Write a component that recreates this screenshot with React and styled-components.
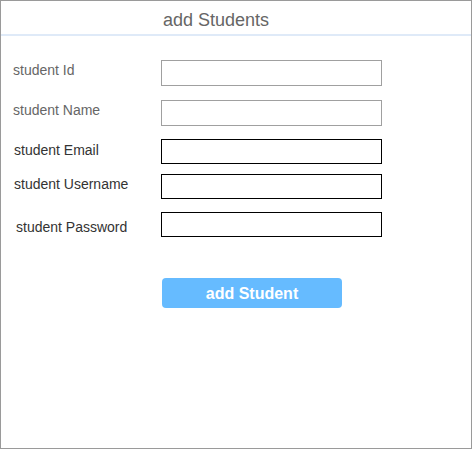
import React from 'react'
import styled, { createGlobalStyle } from 'styled-components'

const GlobalStyle = createGlobalStyle`
    html, body {
        margin: 0;
        padding: 0;
        background: #ffffff;
    }
    body {
        font-family: "Liberation Sans", Arial, sans-serif;
    }
`;

const Frame = styled.div`
    box-sizing: border-box;
    width: 472px;
    height: 449px;
    border: 1px solid #9a9a9a;
    background: #ffffff;
`;

const Header = styled.div`
    box-sizing: border-box;
    height: 35px;
    padding: 9px 0 0 162px;
    border-bottom: 2px solid #dfeaf8;
    font-size: 18px;
    line-height: 21px;
    color: #666666;
`;

const Form = styled.div`
    display: flex;
    flex-direction: column;
    padding-top: 24px;
`;

const Row = styled.div`
    display: flex;
    align-items: flex-start;
    margin-top: ${p => p.$gap}px;
`;

const Label = styled.span`
    box-sizing: border-box;
    width: 160px;
    padding-left: ${p => p.$indent}px;
    padding-top: ${p => p.$drop}px;
    font-size: 14px;
    line-height: 16px;
    color: ${p => (p.$muted ? '#666666' : '#333333')};
`;

const Field = styled.input`
    box-sizing: border-box;
    width: 221px;
    height: ${p => p.$h}px;
    margin: 0;
    padding: 0 4px;
    border: 1px solid ${p => (p.$muted ? '#a0a0a0' : '#000000')};
    border-radius: 0;
    background: #ffffff;
    outline: none;
    font-family: inherit;
    font-size: 14px;
`;

const Actions = styled.div`
    display: flex;
    padding: 41px 0 0 161px;
`;

const AddButton = styled.button`
    width: 180px;
    height: 30px;
    padding: 2px 0 0;
    border: none;
    border-radius: 4px;
    background: #66bbff;
    color: #ffffff;
    font-family: inherit;
    font-size: 16px;
    font-weight: bold;
    cursor: pointer;
`;

const fields = [
    { label: 'student Id', gap: 0, indent: 12, drop: 2, h: 26, muted: true },
    { label: 'student Name', gap: 14, indent: 12, drop: 2, h: 26, muted: true },
    { label: 'student Email', gap: 13, indent: 13, drop: 3, h: 25, muted: false },
    { label: 'student Username', gap: 10, indent: 13, drop: 2, h: 25, muted: false },
    { label: 'student Password', gap: 13, indent: 15, drop: 7, h: 25, muted: false },
];

function App() {
    return (
        <>
            <GlobalStyle />
            <Frame>
                <Header>add Students</Header>
                <Form>
                    {fields.map(f => (
                        <Row key={f.label} $gap={f.gap}>
                            <Label $indent={f.indent} $drop={f.drop} $muted={f.muted}>{f.label}</Label>
                            <Field $h={f.h} $muted={f.muted} />
                        </Row>
                    ))}
                </Form>
                <Actions>
                    <AddButton>add Student</AddButton>
                </Actions>
            </Frame>
        </>
    )
}

export default App
